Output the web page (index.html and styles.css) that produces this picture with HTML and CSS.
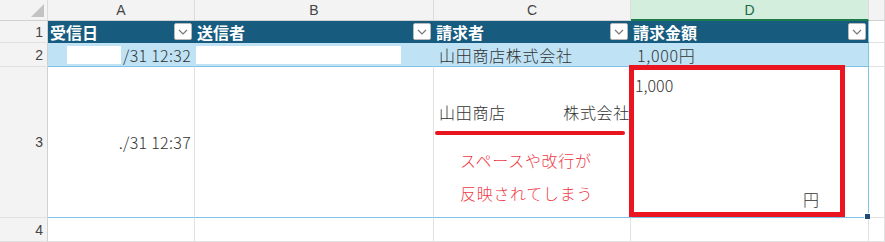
FILE: index.html
```html
<!DOCTYPE html>
<html lang="ja">
<head>
<meta charset="utf-8">
<link rel="stylesheet" href="styles.css">
</head>
<body>
<div class="sheet">
  <div class="ch corner"><span class="tri"></span></div>
  <div class="ch">A</div>
  <div class="ch">B</div>
  <div class="ch">C</div>
  <div class="ch sel">D</div>
  <div class="ch"></div>

  <div class="rh">1</div>
  <div class="th"><span>受信日</span><span class="dd"><svg width="10" height="6" viewBox="0 0 10 6"><path d="M1 1l4 4 4-4" fill="none" stroke="#777" stroke-width="1.2"/></svg></span></div>
  <div class="th"><span>送信者</span><span class="dd"><svg width="10" height="6" viewBox="0 0 10 6"><path d="M1 1l4 4 4-4" fill="none" stroke="#777" stroke-width="1.2"/></svg></span></div>
  <div class="th"><span>請求者</span><span class="dd"><svg width="10" height="6" viewBox="0 0 10 6"><path d="M1 1l4 4 4-4" fill="none" stroke="#777" stroke-width="1.2"/></svg></span></div>
  <div class="th last"><span>請求金額</span><span class="dd"><svg width="10" height="6" viewBox="0 0 10 6"><path d="M1 1l4 4 4-4" fill="none" stroke="#777" stroke-width="1.2"/></svg></span></div>
  <div class="c"></div>

  <div class="rh">2</div>
  <div class="tr right"><span class="mask ma"></span><span class="num">/31 12:32</span></div>
  <div class="tr"><span class="mask mb"></span></div>
  <div class="tr"><span class="txt">山田商店株式会社</span></div>
  <div class="tr last"><span class="txt">1,000円</span></div>
  <div class="c"></div>

  <div class="rh">3</div>
  <div class="c3 right mid"><span class="num">./31 12:37</span></div>
  <div class="c3"></div>
  <div class="c3 cc">
    <div class="split"><span>山田商店</span><span>株式会社</span></div>
    <span class="uline"></span>
    <div class="note">スペースや改行が<br>反映されてしまう</div>
  </div>
  <div class="c3 last dd3">
    <span class="amt">1,000</span>
    <span class="yen">円</span>
    <span class="redbox"></span>
    <span class="handle"></span>
  </div>
  <div class="c"></div>

  <div class="rh">4</div>
  <div class="c"></div>
  <div class="c"></div>
  <div class="c"></div>
  <div class="c"></div>
  <div class="c"></div>
</div>
</body>
</html>
```
FILE: styles.css
```css
* { box-sizing: border-box; }
html, body { margin: 0; padding: 0; background: #fff; }
body { font-family: "Noto Sans CJK JP", "Noto Sans", sans-serif; color: #333; overflow: hidden; }

.sheet {
  display: grid;
  grid-template-columns: 48px 147px 239px 197px 238px 1fr;
  grid-template-rows: 21px 22px 24px 151px 24px;
  width: 885px;
  height: 242px;
}
.sheet > div {
  border-right: 1px solid #e1e1e1;
  border-bottom: 1px solid #e1e1e1;
  font-size: 15px;
  line-height: 1;
  font-weight: 300;
}
.ch {
  background: #f3f3f3;
  color: #444;
  display: flex;
  align-items: center;
  justify-content: center;
  font-family: "Liberation Sans", "Noto Sans", sans-serif;
  font-size: 14px !important;
  font-weight: 400 !important;
  border-right-color: #dcdcdc !important;
  border-bottom-color: #d0d0d0 !important;
}
.ch.corner { position: relative; }
.tri {
  position: absolute;
  right: 3px; bottom: 3px;
  width: 0; height: 0;
  border-left: 13px solid transparent;
  border-bottom: 13px solid #c3c3c3;
}
.ch.sel {
  background: #d3eedd;
  color: #1d6b45;
  border-bottom: 2px solid #1f7a4b !important;
}
.rh {
  background: #f3f3f3;
  color: #444;
  display: flex;
  align-items: center;
  justify-content: flex-end;
  padding-right: 4px;
  font-family: "Liberation Sans", "Noto Sans", sans-serif;
  font-size: 14px !important;
  font-weight: 400 !important;
  border-right-color: #d0d0d0 !important;
}
.th {
  background: #175b7f;
  color: #fff;
  font-weight: bold !important;
  font-size: 16px !important;
  display: flex;
  align-items: center;
  justify-content: space-between;
  padding-left: 2px;
  padding-right: 2px;
  border-right-color: #175b7f !important;
  border-bottom-color: #175b7f !important;
}
.th.last { border-right: 1px solid #80c4e6 !important; }
.dd {
  width: 18px;
  height: 17px;
  background: #fff;
  border: 1px solid #b9b9b9;
  border-radius: 2px;
  display: flex;
  align-items: center;
  justify-content: center;
}
.tr {
  background: #bfe3f5;
  font-size: 16px !important;
  display: flex;
  align-items: center;
  padding: 0 3px;
  border-right-color: #bfe3f5 !important;
  border-bottom: 1px solid #7fc2e6 !important;
}
.tr.last { border-right: 1px solid #80c4e6 !important; padding-left: 4px; }
.right { justify-content: flex-end; }
.tr.right { padding-right: 3px; }
.num { letter-spacing: 0.3px; }
.mask { background: #fff; height: 18px; display: block; }
.ma { width: 54px; margin-right: 2px; }
.mb { width: 205px; margin-left: -2px; height: 18px; }
.tr .txt { padding-left: 2px; letter-spacing: 0.7px; }

.c3 {
  font-size: 16px !important;
  border-bottom: 1px solid #7fc2e6 !important;
  position: relative;
}
.c3.mid { display: flex; align-items: center; padding-right: 3px; }
.split {
  position: absolute;
  left: 5px; right: 0;
  top: 37px;
  display: flex;
  justify-content: space-between;
  letter-spacing: 0.7px;
}
.uline {
  position: absolute;
  left: 1px;
  width: 190px;
  top: 64px;
  height: 4px;
  border-radius: 2px;
  background: #e8141e;
}
.note {
  position: absolute;
  left: 26px;
  top: 77px;
  color: #ef3a46;
  font-size: 16px;
  line-height: 33px;
  letter-spacing: 0.7px;
}
.c3.last { border-right: 1px solid #80c4e6 !important; }
.amt { position: absolute; left: 4px; top: 10px; }
.yen { position: absolute; left: 172px; top: 124px; }
.redbox {
  position: absolute;
  left: -2px; top: -2px;
  width: 216px;
  height: 152px;
  border: 5px solid #ea1520;
}
.handle {
  position: absolute;
  right: -2px; bottom: -2px;
  width: 6px; height: 6px;
  background: #1e4a78;
  border-left: 1px solid #fff;
  border-top: 1px solid #fff;
}
```
